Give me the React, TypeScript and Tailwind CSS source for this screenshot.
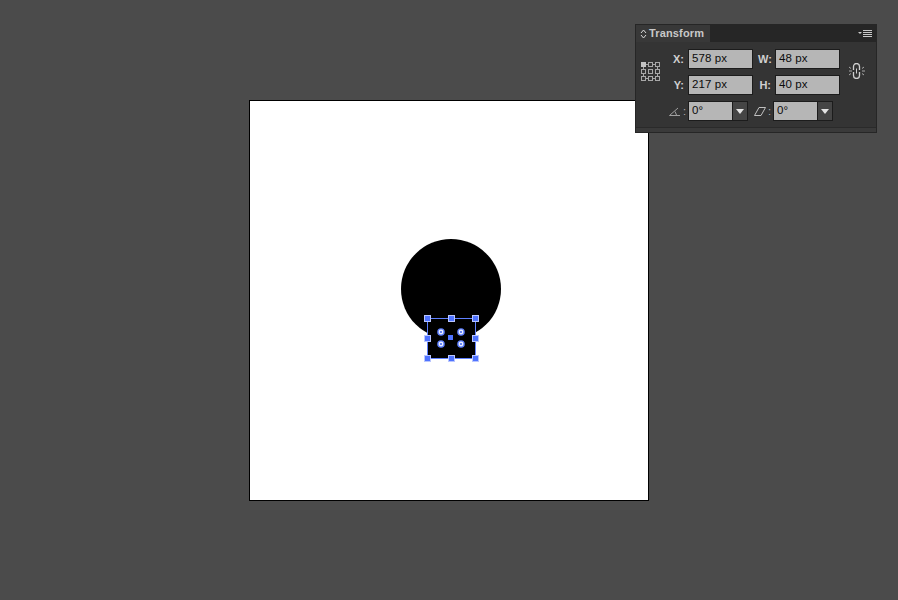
import React from "react";

function Field({ label, value }: { label: string; value: string }) {
  return (
    <div className="flex items-center">
      <span className="w-[17px] pr-[4px] text-right text-[11px] font-bold text-[#d0d0d0] leading-none whitespace-nowrap">{label}</span>
      <div className="w-[65px] h-[20px] bg-[#b6b6b6] border border-[#1c1c1c] pl-[3px] text-[11.5px] tracking-[0.1px] leading-[17px] text-[#0c0c0c]">{value}</div>
    </div>
  );
}

function Combo({ value }: { value: string }) {
  return (
    <div className="flex h-[20px] w-[60px] border border-[#1c1c1c]">
      <div className="flex-1 bg-[#b6b6b6] pl-[3px] text-[11.5px] leading-[17px] text-[#0c0c0c]">{value}</div>
      <div className="w-[15px] bg-[#454545] border-l border-[#1c1c1c] flex items-center justify-center">
        <svg width="8" height="5" viewBox="0 0 8 5"><path d="M0 0h8L4 5z" fill="#e4e4e4" /></svg>
      </div>
    </div>
  );
}

function RefGrid() {
  const pts = [0.5, 7.5, 14.5];
  return (
    <svg width="20" height="20" viewBox="0 0 20 20">
      <path d="M5 2.500h3M12 2.500h3M5 16.500h3M12 16.500h3M2.500 5v3M2.500 12v3M16.500 5v3M16.500 12v3" stroke="#a8a8a8" strokeWidth="1" fill="none" />
      {pts.map((y) =>
        pts.map((x) =>
          x === 0.5 && y === 0.5 ? (
            <rect key={x + "-" + y} x={0} y={0} width={5} height={5} fill="#c4c4c4" />
          ) : (
            <rect key={x + "-" + y} x={x} y={y} width={4} height={4} fill="none" stroke="#a8a8a8" strokeWidth="1" />
          )
        )
      )}
    </svg>
  );
}

function Selection() {
  const hx = [427, 451, 475];
  const hy = [318, 338, 358];
  return (
    <svg className="absolute left-0 top-0" width="898" height="600" viewBox="0 0 898 600">
      <circle cx="451" cy="289" r="50" fill="#000" />
      <rect x="427" y="318" width="48" height="40" fill="#000" />
      <rect x="427.5" y="318.5" width="48" height="40" fill="none" stroke="#5f80ff" strokeWidth="1" />
      {hy.map((y) =>
        hx.map((x) =>
          x === 451 && y === 338 ? null : (
            <g key={x + "-" + y}>
              <rect x={x - 3} y={y - 3} width="7" height="7" fill="#b9c6ff" />
              <rect x={x - 2} y={y - 2} width="5" height="5" fill="#4f73ff" />
            </g>
          )
        )
      )}
      <rect x="448" y="335" width="5" height="5" fill="#4f73ff" />
      {[
        [441, 332],
        [461, 332],
        [441, 344],
        [461, 344],
      ].map(([x, y]) => (
        <g key={x + "-" + y}>
          <circle cx={x} cy={y} r="3.8" fill="#5f80ff" />
          <circle cx={x} cy={y} r="2.4" fill="#e8ecff" />
          <circle cx={x} cy={y} r="1" fill="#3f63ef" />
        </g>
      ))}
    </svg>
  );
}

export default function App() {
  return (
    <div className="relative w-[898px] h-[600px] overflow-hidden bg-[#4b4b4b] font-['Liberation_Sans',Arial,sans-serif]">
      <div className="absolute left-[249px] top-[100px] w-[400px] h-[401px] bg-white border border-black" />
      <Selection />

      <div className="absolute left-[635px] top-[24px] w-[242px] h-[109px] bg-[#343434] border border-[#262626] flex flex-col">
        <div className="h-[17px] bg-[#1f1f1f] flex items-stretch">
          <div className="w-[74px] bg-[#383838] flex items-center pl-[4px] gap-[2px]">
            <svg width="7" height="10" viewBox="0 0 7 10" fill="none" stroke="#d8d8d8" strokeWidth="1">
              <path d="M1 4l2.500-3L6 4M1 6l2.500 3L6 6" />
            </svg>
            <span className="text-[11px] tracking-[0.15px] font-bold text-[#c8c8c8] leading-none">Transform</span>
          </div>
          <div className="flex-1 bg-[#262626] flex items-center justify-end pr-[4px]">
            <svg width="14" height="9" viewBox="0 0 14 9">
              <path d="M0 3h4L2 5z" fill="#c8c8c8" />
              <path d="M5 1.500h9M5 3.500h9M5 5.500h9M5 7.500h9" stroke="#c8c8c8" strokeWidth="1" />
            </svg>
          </div>
        </div>

        <div className="flex flex-1 flex-col">
          <div className="flex pl-[5px] pt-[7px]">
            <div className="pt-[13px] w-[30px]">
              <RefGrid />
            </div>
            <div className="flex flex-col gap-[6px]">
              <Field label="X:" value="578 px" />
              <Field label="Y:" value="217 px" />
            </div>
            <div className="flex flex-col gap-[6px] ml-[5px]">
              <Field label="W:" value="48 px" />
              <Field label="H:" value="40 px" />
            </div>
            <div className="ml-[9px] pt-[14px]">
              <svg width="16" height="16" viewBox="0 0 16 16" fill="none" stroke="#d0d0d0" strokeWidth="1">
                <path d="M4.500 7V3.500a3 3 0 0 1 6 0V7M4.500 9v3.500a3 3 0 0 0 6 0V9" strokeWidth="1.300" />
                <path d="M7.500 5.500v5" strokeWidth="1" />
                <path d="M0 4l2 1.500M0 8h3M0 12l2-1.500M15 4l-2 1.500M16 8h-3M15 12l-2-1.500" stroke="#a8a8a8" />
              </svg>
            </div>
          </div>
          <div className="flex items-center pl-[33px] mt-[6px]">
            <div className="w-[19px] flex items-center">
              <svg width="12" height="9" viewBox="0 0 12 9" fill="none" stroke="#a0a0a0" strokeWidth="1">
                <path d="M0.500 8.500h10.500M0.500 8.500L9 1" />
                <path d="M6 4.500L7.500 8" />
              </svg>
              <span className="text-[11px] text-[#b0b0b0] leading-none ml-[2px]">:</span>
            </div>
            <Combo value="0°" />
            <div className="w-[19px] ml-[6px] flex items-center">
              <svg width="12" height="9" viewBox="0 0 12 9" fill="none" stroke="#c0c0c0" strokeWidth="1">
                <path d="M0.500 8.500L5 0.500h6.500L7 8.500z" />
              </svg>
              <span className="text-[11px] text-[#b0b0b0] leading-none ml-[2px]">:</span>
            </div>
            <Combo value="0°" />
          </div>
          <div className="mt-[6px] flex-1 border-t border-[#2a2a2a] bg-[#3a3a3a]" />
        </div>
      </div>
    </div>
  );
}
